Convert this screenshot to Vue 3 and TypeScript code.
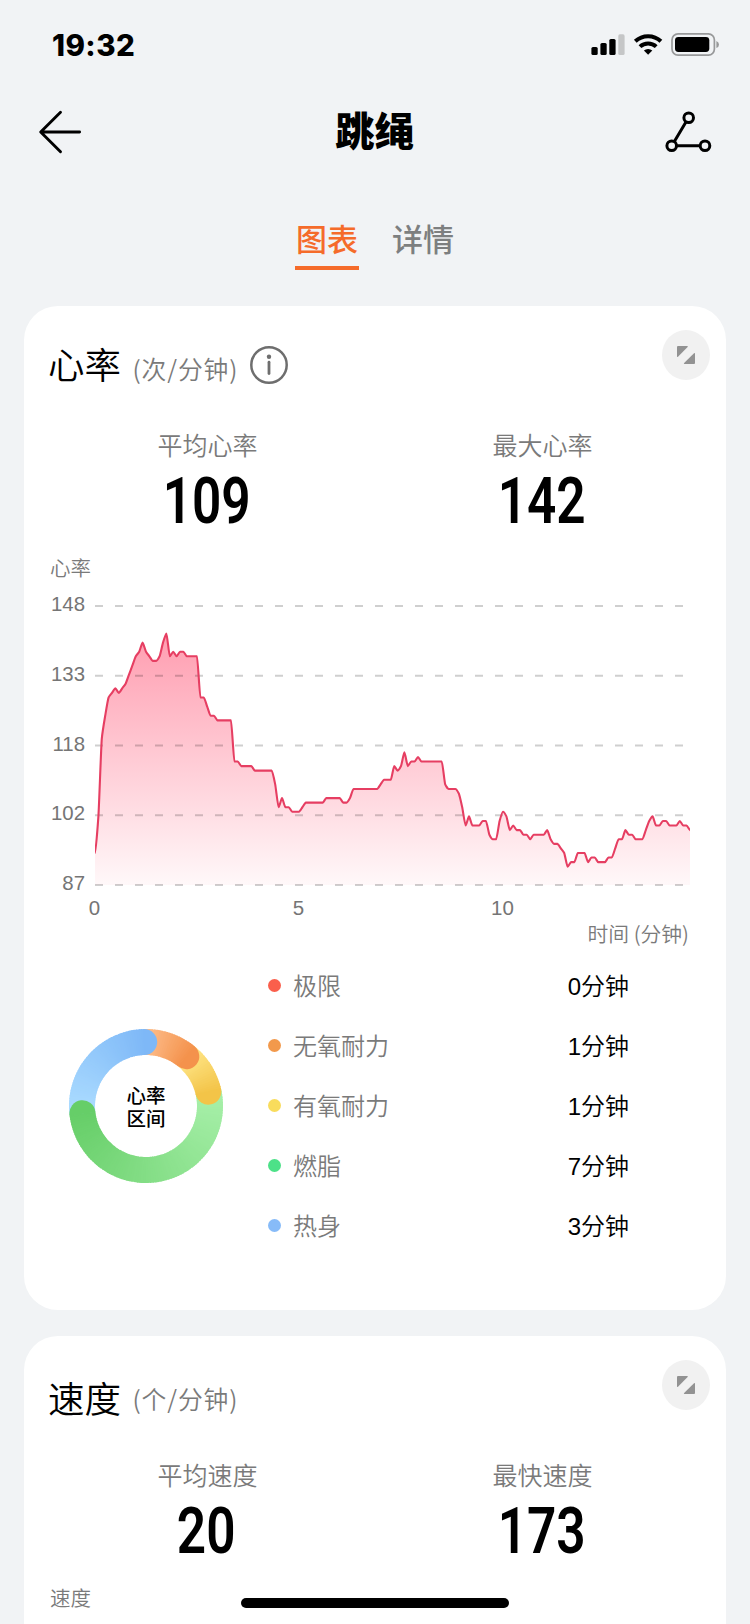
<script setup lang="ts">
interface Stat {
  label: string
  value: string
}

interface Zone {
  name: string
  color: string
  duration: string
}

interface RingSegment {
  from: number
  to: number
  start: [number, number, number]
  end: [number, number, number]
}

interface Slice {
  d: string
  color: string
}

const heartStats: Stat[] = [
  { label: '平均心率', value: '109' },
  { label: '最大心率', value: '142' },
]

const speedStats: Stat[] = [
  { label: '平均速度', value: '20' },
  { label: '最快速度', value: '173' },
]

const zones: Zone[] = [
  { name: '极限', color: '#fa5f4c', duration: '0分钟' },
  { name: '无氧耐力', color: '#f2994c', duration: '1分钟' },
  { name: '有氧耐力', color: '#f9dc5c', duration: '1分钟' },
  { name: '燃脂', color: '#4de188', duration: '7分钟' },
  { name: '热身', color: '#87bbf8', duration: '3分钟' },
]

// Heart rate, one [bpm, sample count] run per entry; a sample is taken every five seconds.
const runs: [number, number][] = [
  [94, 1], [102, 1], [119, 1], [124, 1], [128, 1], [129, 1], [130, 1], [129, 1], [130, 1], [131, 1],
  [133, 1], [135, 1], [137, 1], [138, 1], [140, 1], [138, 1], [137, 1], [136, 2], [137, 1], [140, 1],
  [142, 1], [137, 1], [138, 1], [137, 1], [138, 2], [137, 4], [128, 2], [126, 1], [124, 2], [123, 5],
  [114, 2], [113, 4], [112, 6], [109, 1], [104, 1], [106, 1], [104, 2], [103, 3], [104, 1], [105, 6],
  [106, 5], [105, 2], [106, 1], [108, 8], [109, 1], [110, 3], [113, 1], [112, 1], [113, 1], [116, 1],
  [113, 1], [114, 2], [115, 1], [114, 7], [109, 1], [108, 3], [107, 1], [104, 1], [100, 1], [102, 1],
  [100, 3], [101, 2], [98, 1], [97, 2], [101, 1], [103, 1], [102, 1], [99, 1], [100, 1], [99, 2],
  [98, 2], [97, 1], [98, 4], [99, 1], [97, 1], [96, 2], [95, 1], [94, 1], [91, 1], [92, 2], [94, 3],
  [92, 1], [93, 2], [92, 3], [93, 2], [95, 1], [97, 2], [99, 1], [98, 2], [97, 3], [99, 1], [101, 1],
  [102, 1], [100, 2], [101, 2], [100, 3], [101, 1], [100, 2], [99, 1],
]

const samples = runs.flatMap(([bpm, count]) => Array<number>(count).fill(bpm))
const plotWidth = 595
const plotHeight = 279
const step = plotWidth / (samples.length - 1)
const points = samples.map((bpm, i) => ({
  x: i * step,
  y: ((148 - bpm) / 61) * plotHeight + 1,
}))

// Tangents are zero at local extremes, so the curve never overshoots a sample.
const slopes = points.map((p, i) => {
  if (i === 0 || i === points.length - 1) return 0
  const before = (p.y - points[i - 1].y) / step
  const after = (points[i + 1].y - p.y) / step
  return before * after <= 0 ? 0 : (2 * before * after) / (before + after)
})
const linePath = points
  .map((p, i) => {
    if (i === 0) return `M0 ${p.y.toFixed(1)}`
    const prev = points[i - 1]
    const h = step * 0.2
    return `C${(prev.x + h).toFixed(2)} ${(prev.y + slopes[i - 1] * h).toFixed(2)} ${(p.x - h).toFixed(2)} ${(p.y - slopes[i] * h).toFixed(2)} ${p.x.toFixed(2)} ${p.y.toFixed(2)}`
  })
  .join(' ')
const areaPath = `${linePath} V${plotHeight + 1} H0 Z`

const gridLines = [0, 1, 2, 3, 4].map((k) => 1 + (k * plotHeight) / 4)
const levels = ['148', '133', '118', '102', '87']

// Ring geometry, degrees clockwise from the top.
const segments: RingSegment[] = [
  { from: -1.5, to: 39, start: [253, 190, 140], end: [244, 146, 76] },
  { from: 39, to: 77, start: [254, 229, 135], end: [243, 196, 72] },
  { from: 77, to: 263.5, start: [168, 240, 170], end: [102, 206, 104] },
  { from: 263.5, to: 358.5, start: [172, 220, 255], end: [126, 184, 247] },
]

function ringPoint(deg: number, radius: number): string {
  const rad = (deg * Math.PI) / 180
  return `${(77 + radius * Math.sin(rad)).toFixed(2)} ${(77 - radius * Math.cos(rad)).toFixed(2)}`
}

function mix(a: number[], b: number[], t: number): string {
  return `rgb(${a.map((v, i) => Math.round(v + (b[i] - v) * t)).join(',')})`
}

const slices: Slice[] = segments.flatMap((s) => {
  const count = Math.ceil((s.to - s.from) / 2)
  const size = (s.to - s.from) / count
  return Array.from({ length: count }, (_, i) => {
    const a = s.from + i * size
    const b = Math.min(a + size + 0.8, s.to + 0.4)
    return {
      d: `M${ringPoint(a, 64)} A64 64 0 0 1 ${ringPoint(b, 64)}`,
      color: mix(s.start, s.end, i / count),
    }
  })
})

const caps: Slice[] = segments.map((s) => ({
  d: `M${ringPoint(s.to - 0.5, 77)} L${ringPoint(s.to, 77)} A13 13 0 0 1 ${ringPoint(s.to, 51)} L${ringPoint(s.to - 0.5, 51)} Z`,
  color: mix(s.start, s.end, 1),
}))
</script>

<template>
  <div class="screen">
    <header class="status">
      <span class="time">19:32</span>
      <svg class="status-icons" width="130" height="26" viewBox="0 0 130 26">
        <rect x="1.4" y="14" width="6.3" height="8" rx="1.6" />
        <rect x="10.4" y="10" width="6.3" height="12" rx="1.6" />
        <rect x="19.3" y="6" width="6.3" height="16" rx="1.6" />
        <rect x="28.3" y="1.3" width="6.3" height="20.7" rx="1.6" fill="#c5c6c7" />
        <g fill="none" stroke="#000" stroke-width="4">
          <path d="M45.3 8.3 A18.5 18.5 0 0 1 70.9 8.3" />
          <path d="M50 13.6 A11.8 11.8 0 0 1 66.2 13.6" />
        </g>
        <path d="M58.1 21.8 L53.9 17.6 A6.2 6.2 0 0 1 62.3 17.6 Z" />
        <rect x="82" y="0.9" width="42.4" height="21.2" rx="6" fill="none" stroke="#98999a" stroke-width="1.7" />
        <rect x="85" y="4" width="34.3" height="15" rx="3.4" />
        <path d="M126.4 8 Q129 9 129 11.5 T126.4 15 Z" fill="#98999a" />
      </svg>
    </header>

    <nav class="nav">
      <svg class="back" width="44" height="44" viewBox="0 0 44 44">
        <path d="M41.6 22 H3 M22.5 2.3 L2.7 22 L22.5 41.7" />
      </svg>
      <h1>跳绳</h1>
      <svg class="track" width="48" height="44" viewBox="0 0 48 44">
        <path d="M21.8 12.2 L10.5 31.2 M12.6 35.7 H35" />
        <circle cx="24.7" cy="7.7" r="4.8" />
        <circle cx="7.7" cy="35.7" r="4.8" />
        <circle cx="41" cy="35.7" r="4.8" />
      </svg>
    </nav>

    <div class="tabs">
      <span class="tab active"><b>图表</b></span>
      <span class="tab"><b>详情</b></span>
    </div>

    <section class="card heart">
      <div class="card-head">
        <h2 class="raised">心率</h2>
        <span class="unit">(次/分钟)</span>
        <svg class="info" width="38" height="38" viewBox="0 0 38 38">
          <circle cx="19" cy="19" r="17.7" fill="none" stroke="#6e6e6e" stroke-width="2.5" />
          <circle cx="19" cy="10.8" r="2.2" fill="#6e6e6e" />
          <path d="M19 16.2 V27.5" stroke="#6e6e6e" stroke-width="2.8" stroke-linecap="round" />
        </svg>
        <span class="expand">
          <svg width="18" height="18" viewBox="0 0 18 18">
            <path d="M1 0 H10.2 Q11.4 0 10.6 0.9 L1 10.7 Q0 11.4 0 10.2 V1 Q0 0 1 0 Z" />
            <path d="M17 18 H7.5 Q6.3 18 7.1 17.1 L17 7.2 Q18 6.5 18 7.6 V17 Q18 18 17 18 Z" />
          </svg>
        </span>
      </div>

      <div class="stats">
        <div v-for="s in heartStats" :key="s.label" class="stat">
          <span class="stat-label">{{ s.label }}</span>
          <span class="stat-value">{{ s.value }}</span>
        </div>
      </div>

      <div class="axis-title">心率</div>
      <div class="chart">
        <div class="levels">
          <span v-for="l in levels" :key="l">{{ l }}</span>
        </div>
        <div class="plot">
          <svg width="595" height="282" viewBox="0 0 595 282">
            <defs>
              <linearGradient id="area" gradientUnits="userSpaceOnUse" x1="0" y1="28" x2="0" y2="280">
                <stop offset="0" stop-color="#ff9db0" />
                <stop offset="1" stop-color="#fff8f9" />
              </linearGradient>
            </defs>
            <path :d="areaPath" fill="url(#area)" />
            <path
              v-for="y in gridLines"
              :key="y"
              :d="`M0 ${y} H590`"
              stroke="#000"
              stroke-opacity="0.19"
              stroke-width="2"
              stroke-dasharray="8 12"
            />
            <path :d="linePath" fill="none" stroke="#e63e62" stroke-width="2.1" stroke-linejoin="round" />
          </svg>
          <div class="ticks">
            <span>0</span>
            <span>5</span>
            <span>10</span>
          </div>
        </div>
      </div>
      <div class="x-title">时间 (分钟)</div>

      <div class="zones">
        <div class="ring">
          <svg width="154" height="154" viewBox="0 0 154 154">
            <path
              v-for="(s, i) in slices"
              :key="i"
              :d="s.d"
              :stroke="s.color"
              fill="none"
              stroke-width="26"
            />
            <path v-for="(c, i) in caps" :key="i" :d="c.d" :fill="c.color" />
          </svg>
          <div class="ring-label">心率<br />区间</div>
        </div>
        <ul class="legend">
          <li v-for="z in zones" :key="z.name">
            <i class="dot" :style="{ background: z.color }"></i>
            <span class="zone-name">{{ z.name }}</span>
            <span class="zone-time">{{ z.duration }}</span>
          </li>
        </ul>
      </div>
    </section>

    <section class="card speed">
      <div class="card-head">
        <h2>速度</h2>
        <span class="unit">(个/分钟)</span>
        <span class="expand">
          <svg width="18" height="18" viewBox="0 0 18 18">
            <path d="M1 0 H10.2 Q11.4 0 10.6 0.9 L1 10.7 Q0 11.4 0 10.2 V1 Q0 0 1 0 Z" />
            <path d="M17 18 H7.5 Q6.3 18 7.1 17.1 L17 7.2 Q18 6.5 18 7.6 V17 Q18 18 17 18 Z" />
          </svg>
        </span>
      </div>
      <div class="stats">
        <div v-for="s in speedStats" :key="s.label" class="stat">
          <span class="stat-label">{{ s.label }}</span>
          <span class="stat-value">{{ s.value }}</span>
        </div>
      </div>
      <div class="axis-title">速度</div>
    </section>

    <div class="home-bar"></div>
  </div>
</template>

<style>
body {
  margin: 0;
  background: #f1f3f5;
}
</style>

<style scoped>
.screen {
  position: relative;
  box-sizing: border-box;
  width: 750px;
  height: 1624px;
  overflow: hidden;
  background: #f1f3f5;
  color: #000;
  font-family: "Liberation Sans", "Noto Sans CJK SC", sans-serif;
}
.status {
  display: flex;
  justify-content: space-between;
  align-items: flex-start;
  height: 88px;
  padding: 0 30px 0 52px;
  box-sizing: border-box;
}
.time {
  margin-top: 27px;
  font: 800 29.5px/36px Inter, sans-serif;
  letter-spacing: 0.4px;
}
.status-icons {
  margin-top: 33px;
}
.nav {
  display: flex;
  justify-content: space-between;
  align-items: center;
  height: 88px;
  padding: 0 38px;
}
.nav h1 {
  margin: -6px 0 0 3px;
  font: 900 39.5px/60px "Noto Sans CJK SC", sans-serif;
}
.back {
  fill: none;
  stroke: #000;
  stroke-width: 2.9;
  stroke-linecap: round;
  stroke-linejoin: round;
}
.track {
  fill: none;
  stroke: #000;
  stroke-width: 3;
}
.tabs {
  display: flex;
  gap: 32px;
  height: 130px;
  padding: 40px 0 0 295px;
  box-sizing: border-box;
}
.tab {
  width: 64px;
  height: 50px;
  border-bottom: 4px solid transparent;
  color: #7d7f80;
  text-align: center;
}
.tab b {
  display: block;
  margin-top: -2px;
  white-space: nowrap;
  font: 500 31px/48px "Noto Sans CJK SC", sans-serif;
}
.tab.active {
  color: #f56b2a;
  border-bottom-color: #f56b2a;
}
.card {
  margin: 0 24px;
  border-radius: 34px;
  background: #fff;
  box-sizing: border-box;
}
.heart {
  height: 1004px;
}
.speed {
  height: 400px;
  margin-top: 26px;
}
.card-head {
  display: flex;
  align-items: center;
  height: 117px;
  padding: 0 16px 0 24px;
  box-sizing: border-box;
}
.card-head h2 {
  margin: 7px 0 0;
  font: 350 36.5px/54px "Noto Sans CJK SC", sans-serif;
}
.card-head h2.raised {
  margin-top: -1px;
}
.unit {
  margin: 6px 0 0 11.5px;
  font: 350 24.8px/36px "Noto Sans CJK SC", sans-serif;
  letter-spacing: 0.9px;
  color: #7a7a7a;
}
.info {
  margin: 0 0 0 12px;
}
.expand {
  display: grid;
  place-items: center;
  width: 48px;
  height: 50px;
  margin: 0 0 19px auto;
  border-radius: 50%;
  background: #f1f1f1;
  fill: #929292;
}
.stats {
  display: grid;
  grid-template-columns: 335px 335px;
  justify-content: center;
  height: 125px;
}
.stat {
  display: flex;
  flex-direction: column;
  align-items: center;
}
.stat-label {
  margin-top: 3px;
  font: 350 25px/36px "Noto Sans CJK SC", sans-serif;
  color: #7a7a7a;
}
.stat-value {
  margin: 4px 2px 0 0;
  font: 600 65px/70px Roboto, sans-serif;
  transform: scaleX(0.79);
}
.axis-title {
  height: 30px;
  margin-left: 26px;
  margin-top: 4px;
  font: 350 20.5px/30px "Noto Sans CJK SC", sans-serif;
  color: #7a7a7a;
}
.chart {
  display: flex;
  height: 320px;
  margin-top: 23px;
}
.levels {
  display: flex;
  flex-direction: column;
  justify-content: space-between;
  width: 61px;
  height: 299px;
  margin: -11px 10px 0 0;
  font-size: 20.4px;
  line-height: 20px;
  text-align: right;
  color: #757575;
}
.plot {
  width: 595px;
}
.plot svg {
  display: block;
}
.ticks {
  display: grid;
  grid-template-columns: 204px 204px 204px;
  width: 612px;
  margin: 9px 0 0 -102.5px;
  font-size: 20.5px;
  line-height: 24px;
  text-align: center;
  color: #757575;
}
.x-title {
  height: 30px;
  margin: -7px 37px 0 0;
  font: 350 20.8px/30px "Noto Sans CJK SC", sans-serif;
  text-align: right;
  color: #7a7a7a;
}
.zones {
  display: flex;
  height: 300px;
  margin-top: 8px;
}
.ring {
  display: grid;
  place-items: center;
  width: 154px;
  height: 154px;
  margin: 73px 0 0 45px;
}
.ring > * {
  grid-area: 1 / 1;
}
.ring-label {
  font: 500 19.5px/23px "Noto Sans CJK SC", sans-serif;
}
.legend {
  width: 361px;
  margin: -0.5px 0 0 45px;
  padding: 0;
  list-style: none;
}
.legend li {
  display: flex;
  align-items: center;
  height: 60px;
}
.dot {
  width: 13px;
  height: 13px;
  border-radius: 50%;
}
.zone-name {
  flex: 1;
  margin: -1px 0 0 12px;
  font: 350 24px/36px "Noto Sans CJK SC", sans-serif;
  color: #7a7a7a;
}
.zone-time {
  margin-top: 2px;
  font-size: 24px;
  font-weight: 350;
  line-height: 36px;
}
.home-bar {
  position: absolute;
  left: 241px;
  bottom: 16px;
  width: 268px;
  height: 10px;
  border-radius: 5px;
  background: #000;
}
</style>
